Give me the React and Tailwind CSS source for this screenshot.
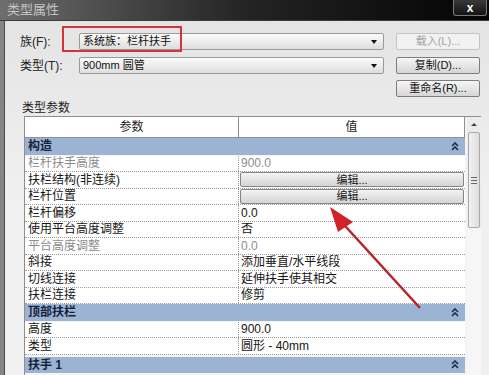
import React from 'react';

const font = { fontFamily: '"Liberation Sans", "Noto Sans CJK SC", sans-serif' };

const rows = [
  { type: 'group', name: '构造' },
  { name: '栏杆扶手高度', value: '900.0', dim: true },
  { name: '扶栏结构(非连续)', button: true },
  { name: '栏杆位置', button: true },
  { name: '栏杆偏移', value: '0.0' },
  { name: '使用平台高度调整', value: '否' },
  { name: '平台高度调整', value: '0.0', dim: true },
  { name: '斜接', value: '添加垂直/水平线段' },
  { name: '切线连接', value: '延伸扶手使其相交' },
  { name: '扶栏连接', value: '修剪' },
  { type: 'group', name: '顶部扶栏' },
  { name: '高度', value: '900.0' },
  { name: '类型', value: '圆形 - 40mm' },
  { type: 'group', name: '扶手 1', gap: true },
];

const Chevrons = () => (
  <svg width="8" height="9" viewBox="0 0 8 9" className="text-[#1d2d4a]">
    <path d="M1 4 L4 1 L7 4 M1 8 L4 5 L7 8" fill="none" stroke="currentColor" strokeWidth="1.6" />
  </svg>
);

const Combo = ({ text }) => (
  <div className="w-[305px] h-[17px] flex items-center justify-between pl-[3px] pr-[6px] border border-[#9a9a9a] rounded-[2px] bg-gradient-to-b from-[#fbfbfb] to-[#dedede] text-[11px] text-[#111]">
    <span>{text}</span>
    <span className="w-0 h-0 border-l-[3px] border-r-[3px] border-t-[4px] border-l-transparent border-r-transparent border-t-[#111]" />
  </div>
);

const SideButton = ({ text, disabled }) => (
  <div
    className={`w-[84px] h-[17px] flex items-center justify-center rounded-[2px] text-[11px] border ${
      disabled
        ? 'border-[#c4c4c4] bg-[#f2f2f2] text-[#a4a4a4]'
        : 'border-[#7e7e7e] bg-gradient-to-b from-[#f6f6f6] to-[#d6d6d6] text-[#111]'
    }`}
  >
    {text}
  </div>
);

const Row = ({ row }) => {
  if (row.type === 'group') {
    return (
      <div className={`h-[17.5px] flex items-center justify-between bg-[#9cb4d3] pl-[3px] pr-[6px] text-[12px] font-bold text-[#16223a] border-b border-[#f4f4f4] ${row.gap ? 'mt-[2px]' : ''}`}>
        <span>{row.name}</span>
        <Chevrons />
      </div>
    );
  }
  return (
    <div className="h-[16.5px] flex border-b border-dotted border-[#9c9c9c] bg-white text-[12px]">
      <div className={`w-[214px] pl-[3px] flex items-center border-r border-dotted border-[#9c9c9c] ${row.dim ? 'text-[#8c8c8c]' : 'text-[#161616]'}`}>
        {row.name}
      </div>
      <div className={`flex-1 flex items-center ${row.button ? 'px-[1px]' : 'pl-[2px]'} ${row.dim ? 'text-[#8c8c8c]' : 'text-[#161616]'}`}>
        {row.button ? (
          <div className="w-full h-[15px] flex items-center justify-center rounded-[2px] border border-[#858585] bg-gradient-to-b from-[#f4f4f4] to-[#d4d4d4] text-[11px]">
            编辑...
          </div>
        ) : (
          row.value
        )}
      </div>
    </div>
  );
};

export default function App() {
  return (
    <div className="relative w-[489px] h-[375px] overflow-hidden flex flex-col bg-[#efefef]" style={font}>
      {/* title bar */}
      <div className="relative h-[21px] shrink-0 flex items-center pl-[7px] bg-gradient-to-r from-[#6e6e6e] via-[#242424] to-[#050505] border-b border-[#3a3a3a]">
        <span className="text-[13px] text-[#c4c4c4]">类型属性</span>
        <div className="absolute right-[2px] top-0 w-[34px] h-[16px] flex items-center justify-center border border-t-0 border-[#7a7a7a] rounded-b-[3px] bg-gradient-to-b from-[#3a3a3a] to-[#141414] text-white text-[12px] font-bold">
          x
        </div>
      </div>

      <div className="flex flex-1 min-h-0">
        {/* window frame */}
        <div className="w-[5px] shrink-0 bg-[#858585] border-r border-[#4a4a4a]" />

        <div className="flex-1 flex flex-col pl-[15px] pt-[12px] bg-gradient-to-b from-[#e4e4e4] via-[#f0f0f0] to-[#f0f0f0]">
          <div className="flex items-center h-[17px]">
            <span className="w-[59px] text-[12px] text-[#222]">族(F):</span>
            <Combo text="系统族：栏杆扶手" />
            <div className="ml-[12px]">
              <SideButton text="载入(L)..." disabled />
            </div>
          </div>
          <div className="flex items-center h-[17px] mt-[7px]">
            <span className="w-[59px] text-[12px] text-[#222]">类型(T):</span>
            <Combo text="900mm 圆管" />
            <div className="ml-[12px]">
              <SideButton text="复制(D)..." />
            </div>
          </div>
          <div className="flex items-center h-[17px] mt-[6px]">
            <div className="ml-[376px]">
              <SideButton text="重命名(R)..." />
            </div>
          </div>

          <div className="mt-[4px] ml-[2px] text-[12px] text-[#222] leading-[14px]">类型参数</div>

          {/* table */}
          <div className="mt-[1px] ml-[4px] w-[457px] flex-1 flex border-t border-l border-[#8f8f8f] bg-[#f4f4f4]">
            <div className="w-[440px] flex flex-col">
              <div className="h-[21px] flex bg-white border-b border-r border-[#8f8f8f] text-[12px] text-[#222]">
                <div className="w-[214px] flex items-center justify-center border-r border-[#8f8f8f]">参数</div>
                <div className="flex-1 flex items-center justify-center">值</div>
              </div>
              {rows.map((r, i) => (
                <Row key={i} row={r} />
              ))}
            </div>
            {/* scrollbar */}
            <div className="ml-[2px] w-[14px] flex flex-col bg-[#ececec]">
              <div className="h-[15px] flex items-center justify-center">
                <span className="w-0 h-0 border-l-[3px] border-r-[3px] border-b-[3px] border-l-transparent border-r-transparent border-b-[#444]" />
              </div>
              <div className="h-[96px] mx-[1px] flex items-center justify-center rounded-[2px] border border-[#a8a8a8] bg-gradient-to-r from-[#f2f2f2] to-[#dedede]">
                <div className="flex flex-col gap-[2px]">
                  <div className="w-[6px] h-[1px] bg-[#666]" />
                  <div className="w-[6px] h-[1px] bg-[#666]" />
                  <div className="w-[6px] h-[1px] bg-[#666]" />
                </div>
              </div>
              <div className="flex-1 bg-[#f6f6f6]" />
            </div>
          </div>
        </div>
      </div>

      {/* red highlight around family combo */}
      <div className="absolute left-[62px] top-[26px] w-[120px] h-[26px] border-2 border-[#d5323a]" />

      {/* red arrow */}
      <svg className="absolute left-0 top-0 pointer-events-none" width="489" height="375">
        <line x1="420" y1="308" x2="336" y2="216" stroke="#b8232b" strokeWidth="2.5" />
        <polygon points="330,207 353,222 338,232" fill="#d1222a" />
      </svg>
    </div>
  );
}
